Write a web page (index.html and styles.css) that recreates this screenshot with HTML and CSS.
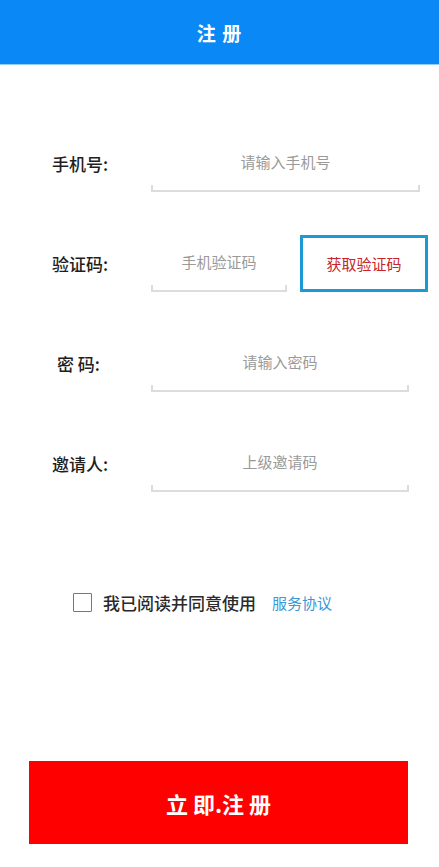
FILE: index.html
```html
<!DOCTYPE html>
<html lang="zh-CN">
<head>
    <meta charset="UTF-8">
    <meta name="viewport" content="width=device-width, initial-scale=1.0">
    <title>注册</title>
    <link rel="stylesheet" href="styles.css">
</head>
<body>
    <!-- Header -->
    <div class="header">
        <h1>注 册</h1>
    </div>

    <!-- Form -->
    <form class="register-form">
        <div class="form-row">
            <label class="row-label" for="phone">手机号:</label>
            <div class="field field-wide">
                <input type="text" id="phone" placeholder="请输入手机号">
            </div>
        </div>

        <div class="form-row">
            <label class="row-label" for="code">验证码:</label>
            <div class="field field-short">
                <input type="text" id="code" placeholder="手机验证码">
            </div>
            <button type="button" class="code-btn">获取验证码</button>
        </div>

        <div class="form-row">
            <label class="row-label label-spaced" for="password">密 码:</label>
            <div class="field">
                <input type="password" id="password" placeholder="请输入密码">
            </div>
        </div>

        <div class="form-row">
            <label class="row-label" for="inviter">邀请人:</label>
            <div class="field">
                <input type="text" id="inviter" placeholder="上级邀请码">
            </div>
        </div>

        <div class="agree-row">
            <span class="checkbox"></span>
            <span class="agree-text">我已阅读并同意使用</span>
            <a href="#" class="agree-link">服务协议</a>
        </div>

        <button type="button" class="submit-btn">立 即.注 册</button>
    </form>
</body>
</html>
```

FILE: styles.css
```css
* {
    margin: 0;
    padding: 0;
    box-sizing: border-box;
}

body {
    font-family: "Noto Sans CJK SC", "Noto Sans", sans-serif;
    background-color: #fff;
    color: #222;
}

/* Header */
.header {
    height: 65px;
    background-color: #0a88f6;
    border-bottom: 1px solid #8fd0ff;
    display: flex;
    align-items: center;
    justify-content: center;
}

.header h1 {
    color: #fff;
    font-size: 19px;
    font-weight: bold;
    letter-spacing: 1px;
}

/* Form */
.register-form {
    padding-top: 69px;
}

.form-row {
    display: flex;
    align-items: center;
    height: 58px;
    margin-bottom: 42px;
    padding-left: 52px;
}

.row-label {
    width: 99px;
    font-size: 17px;
    font-weight: 500;
    color: #1e1e1e;
}

.label-spaced {
    padding-left: 5px;
}

/* underline with small end ticks, like a native edit text */
.field {
    width: 258px;
    height: 58px;
    border-bottom: 2px solid #dcdcdc;
    background:
        linear-gradient(#dcdcdc, #dcdcdc) left bottom / 2px 5px no-repeat,
        linear-gradient(#dcdcdc, #dcdcdc) right bottom / 2px 5px no-repeat;
    display: flex;
    align-items: center;
    padding: 0 2px 2px;
}

.field-wide {
    width: 269px;
}

.field-short {
    width: 136px;
}

.field input {
    width: 100%;
    height: 50px;
    border: none;
    outline: none;
    background: transparent;
    text-align: center;
    font-family: inherit;
    font-size: 15px;
    color: #333;
}

.field input::placeholder {
    color: #9a9a9a;
}

.code-btn {
    width: 128px;
    height: 57px;
    margin-left: 13px;
    border: 3px solid #1b9ad6;
    background: #fff;
    color: #c8242b;
    font-family: inherit;
    font-size: 15px;
    cursor: pointer;
}

/* Agreement */
.agree-row {
    display: flex;
    align-items: center;
    height: 24px;
    margin-top: 98px;
    padding-left: 73px;
}

.checkbox {
    width: 19px;
    height: 19px;
    border: 1.5px solid #777;
    border-radius: 1px;
    margin-right: 11px;
}

.agree-text {
    font-size: 17px;
    font-weight: 500;
    color: #2a2a2a;
}

.agree-link {
    margin-left: 16px;
    font-size: 15px;
    color: #3a98d8;
    text-decoration: none;
}

/* Submit */
.submit-btn {
    display: block;
    width: 379px;
    height: 83px;
    margin: 147px 0 0 29px;
    border: none;
    background: #ff0000;
    color: #fff;
    font-family: inherit;
    font-size: 22px;
    font-weight: bold;
    cursor: pointer;
}
```
